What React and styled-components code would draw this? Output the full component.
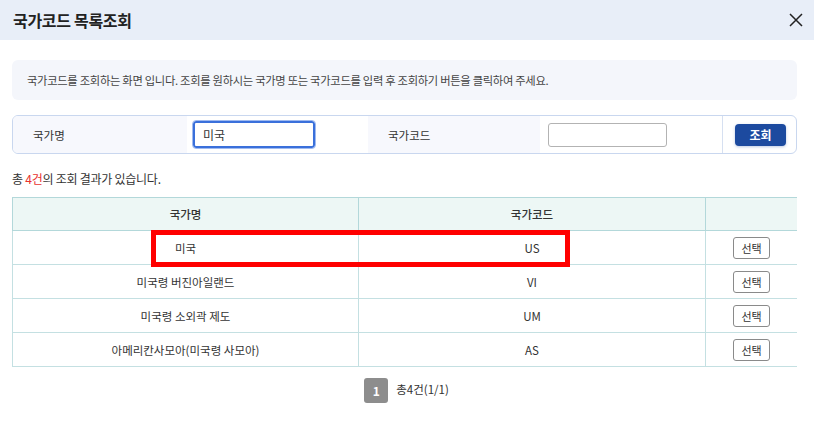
import React, { useState } from "react";
import styled, { createGlobalStyle } from "styled-components";

const GlobalStyle = createGlobalStyle`
    html, body {
        margin: 0;
        padding: 0;
        background: #ffffff;
        font-family: "Noto Sans CJK KR", "Noto Sans", "Liberation Sans", sans-serif;
        color: #333;
    }
    * {
        box-sizing: border-box;
    }
`;

const Modal = styled.div`
    width: 814px;
    height: 434px;
    background: #fff;
    overflow: hidden;
`;

const Header = styled.div`
    height: 40px;
    background: #e8eef8;
    display: flex;
    align-items: center;
    justify-content: space-between;
    padding: 0 10px 0 13px;
`;

const Title = styled.h1`
    margin: 0;
    font-size: 16px;
    font-weight: 700;
    color: #222;
    letter-spacing: -0.3px;
`;

const CloseButton = styled.button`
    border: none;
    background: none;
    padding: 0;
    width: 16px;
    height: 16px;
    display: flex;
    align-items: center;
    justify-content: center;
    cursor: pointer;
`;

const Body = styled.div`
    padding: 20px 17px 0 12px;
    display: flex;
    flex-direction: column;
`;

const InfoBox = styled.div`
    height: 40px;
    background: #f4f6fb;
    border-radius: 6px;
    display: flex;
    align-items: center;
    padding-left: 15px;
    font-size: 11.3px;
    color: #444;
    letter-spacing: -0.3px;
`;

const SearchBox = styled.div`
    margin-top: 15px;
    height: 39px;
    border: 1px solid #c9d7ef;
    border-radius: 6px;
    display: grid;
    grid-template-columns: 174px 181px 172px 182px 1fr;
    overflow: hidden;
`;

const LabelCell = styled.div`
    background: #f7f8fd;
    display: flex;
    align-items: center;
    padding-left: 20px;
    font-size: 11.5px;
    color: #333;
`;

const InputCell = styled.div`
    background: #fff;
    display: flex;
    align-items: center;
    padding-left: ${(props) => props.pad || 7}px;
`;

const ButtonCell = styled.div`
    border-left: 1px solid #d6e0f1;
    display: flex;
    align-items: center;
    padding-left: 12px;
`;

const TextInput = styled.input`
    width: ${(props) => props.w}px;
    height: ${(props) => (props.focused ? 27 : 24)}px;
    border: ${(props) => (props.focused ? "2px solid #3a70db" : "1px solid #b3b3b3")};
    border-radius: 3px;
    padding: 0 8px;
    font-size: 12px;
    font-family: inherit;
    color: #333;
    outline: ${(props) => (props.focused ? "1px solid #9fbaf0" : "none")};
    outline-offset: 0;
`;

const SearchButton = styled.button`
    width: 51px;
    height: 22px;
    background: #1c4a9f;
    color: #fff;
    border: none;
    border-radius: 4px;
    font-size: 12px;
    font-weight: 700;
    font-family: inherit;
    box-shadow: 0 1px 3px rgba(28, 74, 159, 0.3);
    cursor: pointer;
`;

const ResultText = styled.p`
    margin: 16px 0 0 0;
    height: 18px;
    font-size: 12px;
    color: #333;
    line-height: 18px;
    letter-spacing: -0.25px;
`;

const Count = styled.span`
    color: #e8322f;
`;

const TableWrap = styled.div`
    margin-top: 9px;
    position: relative;
`;

const Table = styled.table`
    width: 785px;
    border-collapse: collapse;
    table-layout: fixed;
    font-size: 11.5px;
`;

const Th = styled.th`
    height: 33px;
    background: #edf7f5;
    font-weight: 500;
    color: #333;
    border: 1px solid #b3d8da;
    border-right: ${(props) => (props.last ? "none" : "1px solid #b3d8da")};
`;

const Td = styled.td`
    height: 34px;
    text-align: center;
    color: #333;
    border: 1px solid #c4e0e2;
    border-right: ${(props) => (props.last ? "none" : "1px solid #c4e0e2")};
`;

const SelectButton = styled.button`
    width: 37px;
    height: 22px;
    border: 1px solid #8a8a8a;
    border-radius: 3px;
    background: #fff;
    font-size: 11px;
    font-family: inherit;
    color: #333;
    padding: 0;
    cursor: pointer;
`;

const Highlight = styled.div`
    position: absolute;
    left: 139px;
    top: 33px;
    width: 419px;
    height: 37px;
    border: 5px solid #ff0000;
    pointer-events: none;
`;

const Pagination = styled.div`
    margin-top: 11px;
    display: flex;
    align-items: center;
    justify-content: center;
    gap: 8px;
    padding-left: 4px;
`;

const PageNum = styled.span`
    width: 24px;
    height: 25px;
    border-radius: 3px;
    background: #8d8d8d;
    color: #fff;
    font-size: 12px;
    font-weight: 700;
    display: flex;
    align-items: center;
    justify-content: center;
`;

const PageInfo = styled.span`
    font-size: 11.5px;
    color: #333;
    margin-top: -4px;
`;

const rows = [
    { name: "미국", code: "US" },
    { name: "미국령 버진아일랜드", code: "VI" },
    { name: "미국령 소외곽 제도", code: "UM" },
    { name: "아메리칸사모아(미국령 사모아)", code: "AS" },
];

export default function App() {
    const [name, setName] = useState("미국");
    const [code, setCode] = useState("");

    return (
        <Modal>
            <GlobalStyle />
            <Header>
                <Title>국가코드 목록조회</Title>
                <CloseButton aria-label="닫기">
                    <svg width="14" height="14" viewBox="0 0 14 14">
                        <path d="M1 1 L13 13 M13 1 L1 13" stroke="#222" strokeWidth="1.5" />
                    </svg>
                </CloseButton>
            </Header>
            <Body>
                <InfoBox>
                    국가코드를 조회하는 화면 입니다. 조회를 원하시는 국가명 또는 국가코드를 입력 후 조회하기 버튼을 클릭하여 주세요.
                </InfoBox>
                <SearchBox>
                    <LabelCell>국가명</LabelCell>
                    <InputCell pad={6}>
                        <TextInput
                            w={122}
                            focused
                            value={name}
                            onChange={(e) => setName(e.target.value)}
                        />
                    </InputCell>
                    <LabelCell>국가코드</LabelCell>
                    <InputCell pad={8}>
                        <TextInput w={119} value={code} onChange={(e) => setCode(e.target.value)} />
                    </InputCell>
                    <ButtonCell>
                        <SearchButton>조회</SearchButton>
                    </ButtonCell>
                </SearchBox>
                <ResultText>
                    총 <Count>4건</Count>의 조회 결과가 있습니다.
                </ResultText>
                <TableWrap>
                    <Table>
                        <colgroup>
                            <col style={{ width: 346 }} />
                            <col style={{ width: 347 }} />
                            <col />
                        </colgroup>
                        <thead>
                            <tr>
                                <Th>국가명</Th>
                                <Th>국가코드</Th>
                                <Th last></Th>
                            </tr>
                        </thead>
                        <tbody>
                            {rows.map((r) => (
                                <tr key={r.code}>
                                    <Td>{r.name}</Td>
                                    <Td>{r.code}</Td>
                                    <Td last>
                                        <SelectButton>선택</SelectButton>
                                    </Td>
                                </tr>
                            ))}
                        </tbody>
                    </Table>
                    <Highlight />
                </TableWrap>
                <Pagination>
                    <PageNum>1</PageNum>
                    <PageInfo>총4건(1/1)</PageInfo>
                </Pagination>
            </Body>
        </Modal>
    );
}
